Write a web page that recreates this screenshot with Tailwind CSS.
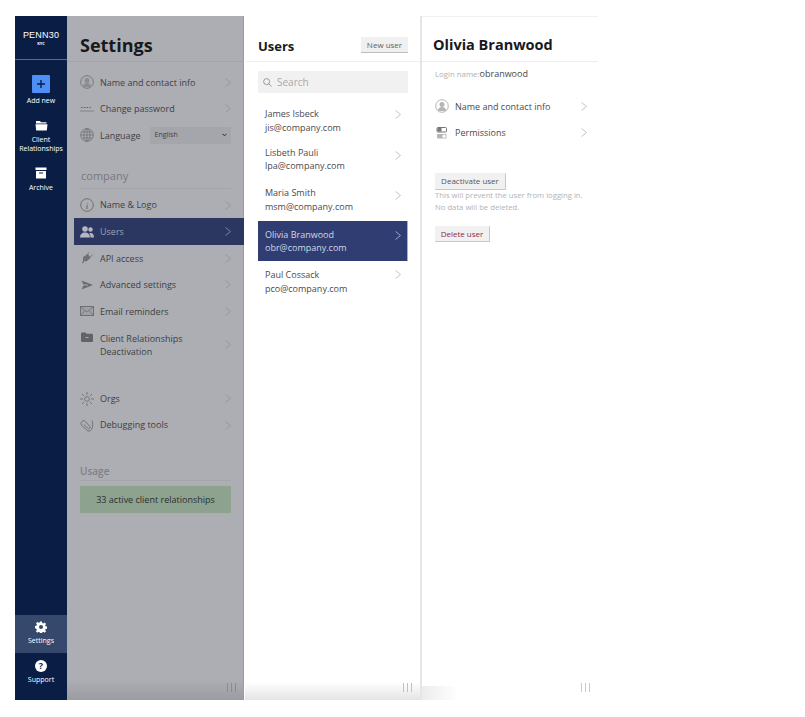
<!doctype html>
<html><head><meta charset="utf-8">
<script src="https://cdn.jsdelivr.net/npm/@tailwindcss/browser@4"></script>
</head>
<body class="bg-white font-['Open_Sans',sans-serif] overflow-hidden">
<div class="w-[805px] h-[717px] pt-[16px] pl-[15px]">
<div class="flex h-[684px] w-[583px]">

<!-- nav -->
<nav class="w-[52px] shrink-0 bg-[#0a1e45] flex flex-col text-white">
  <div class="h-[44px] border-b border-[#5c6b88] flex flex-col items-center pt-[13px]">
    <span class="text-[9px] leading-[12px] tracking-[0.2px] font-['Liberation_Sans',sans-serif]">PENN30</span>
    <span class="text-[4px] leading-[5px] font-bold">KYC</span>
  </div>
  <div class="flex flex-col items-center mt-[15px]">
    <span class="w-[18px] h-[18px] bg-[#4d8ff5] rounded-[1px] flex items-center justify-center">
      <svg width="8" height="8" viewBox="0 0 8 8"><path d="M4 0v8M0 4h8" stroke="#0a1e45" stroke-width="1.4"/></svg>
    </span>
    <span class="text-[7px] leading-[9px] mt-[3px]">Add new</span>
    <svg class="mt-[15px]" width="13" height="11" viewBox="0 0 13 11"><path d="M1 1h4l1 1.2h5.500v1.200H1zM0.5 4.200h12l-.7 6.300H1.200z" fill="#fff"/></svg>
    <span class="text-[7px] leading-[9px] mt-[4px] text-center whitespace-nowrap">Client<br>Relationships</span>
    <svg class="mt-[14px]" width="12" height="12" viewBox="0 0 12 12"><path d="M0.500 0.500h11v2.500h-11zM1 4h10v7.500H1z" fill="#fff"/><path d="M4 6h4" stroke="#0a1e45" stroke-width="1"/></svg>
    <span class="text-[7px] leading-[9px] mt-[4px]">Archive</span>
  </div>
  <div class="mt-auto flex flex-col">
    <div class="h-[38px] bg-[#36486b] flex flex-col items-center pt-[6px]">
      <svg width="12" height="12" viewBox="0 0 24 24"><path fill="#fff" fill-rule="evenodd" d="M10 1h4l.6 3.200 2 .8 2.700-1.800 2.800 2.800-1.800 2.700.8 2 3.200.6v4l-3.200.6-.8 2 1.800 2.700-2.800 2.800-2.700-1.800-2 .8-.6 3.200h-4l-.6-3.200-2-.8-2.700 1.800-2.800-2.800 1.800-2.700-.8-2L-.1 14v-4l3.200-.6.8-2L2.100 4.700l2.800-2.800 2.700 1.800 2-.8zM12 8a4 4 0 1 0 0 8 4 4 0 0 0 0-8z"/></svg>
      <span class="text-[7px] leading-[9px] mt-[3px]">Settings</span>
    </div>
    <div class="h-[46px] mt-[1px] flex flex-col items-center pt-[6px]">
      <span class="w-[12px] h-[12px] rounded-full bg-white text-[#0a1e45] text-[9px] leading-[12px] font-bold text-center">?</span>
      <span class="text-[7px] leading-[9px] mt-[3px]">Support</span>
    </div>
  </div>
</nav>

<!-- settings -->
<section class="relative w-[178px] shrink-0 bg-[#adaeb3] border-r border-white text-[#3d3e42] text-[9px] shadow-[inset_-1px_0_0_#9a9ba2]">
  <div class="h-[46px] border-b border-[#a3a4a9] flex items-center pl-[13px] pt-[13px]">
    <h1 class="text-[18px] leading-[24px] font-bold text-[#18191c]">Settings</h1>
  </div>
  <ul class="mt-[7px] pl-[13px] pr-[13px]">
    <li class="h-[26.6px] flex items-center">
      <svg class="w-[14px] shrink-0" width="14" height="14" viewBox="0 0 14 14"><circle cx="7" cy="7" r="6.300" fill="none" stroke="#77787d"/><circle cx="7" cy="5.500" r="2.500" fill="#8b8c91"/><path d="M3 12c0-3 1.500-4 4-4s4 1 4 4z" fill="#8b8c91"/></svg>
      <span class="ml-[6px] flex-1">Name and contact info</span>
      <svg width="6" height="9" viewBox="0 0 6 9"><path d="M.5.500l5 4-5 4" fill="none" stroke="#96979c"/></svg>
    </li>
    <li class="h-[26.6px] flex items-center">
      <svg class="w-[14px] shrink-0" width="14" height="6" viewBox="0 0 14 6"><path d="M1 1.500h1.500M3.800 1.500h1.500M6.600 1.500h1.500M9.400 1.500h1.500" stroke="#5f6065"/><path d="M0 5h14" stroke="#77787d" stroke-width=".8"/></svg>
      <span class="ml-[6px] flex-1">Change password</span>
      <svg width="6" height="9" viewBox="0 0 6 9"><path d="M.5.500l5 4-5 4" fill="none" stroke="#96979c"/></svg>
    </li>
    <li class="h-[26.6px] flex items-center">
      <svg class="w-[14px] shrink-0" width="14" height="14" viewBox="0 0 14 14" fill="none" stroke="#6f7075" stroke-width=".8"><circle cx="7" cy="7" r="6.300"/><ellipse cx="7" cy="7" rx="3" ry="6.300"/><path d="M7 .7v12.600M.7 7h12.600M1.500 4h11M1.500 10h11"/></svg>
      <span class="ml-[6px]">Language</span>
      <span class="ml-[9px] flex-1 h-[17px] bg-[#a5a6ab] flex items-center justify-between pl-[5px] pr-[4px] text-[7px]">English
        <svg width="5" height="4" viewBox="0 0 5 4"><path d="M.5.800l2 2 2-2" fill="none" stroke="#25262a" stroke-width="1"/></svg>
      </span>
    </li>
  </ul>
  <div class="mt-[19px] mx-[13px] h-[21px] text-[11px] leading-[16px] text-[#77787e] border-b border-[#a5a6ab] pl-px">company</div>
  <ul class="mt-[3px] pl-[7px]">
    <li class="h-[26.6px] flex items-center pl-[6px] pr-[13px]">
      <svg class="w-[14px] shrink-0" width="14" height="14" viewBox="0 0 14 14"><circle cx="7" cy="7" r="6.300" fill="none" stroke="#6f7075"/><text x="7" y="10.500" text-anchor="middle" font-size="9" font-style="italic" font-family="Liberation Serif" fill="#55565b">i</text></svg>
      <span class="ml-[6px] flex-1">Name &amp; Logo</span>
      <svg width="6" height="9" viewBox="0 0 6 9"><path d="M.5.500l5 4-5 4" fill="none" stroke="#96979c"/></svg>
    </li>
    <li class="h-[26.6px] flex items-center pl-[6px] pr-[13px] bg-[#2b3760] text-[#9da3b8]">
      <svg class="w-[14px] shrink-0" width="14" height="12" viewBox="0 0 14 12" fill="#b5b7c2"><circle cx="5" cy="3" r="2.800"/><path d="M0 11.500c0-3 2-5 5-5s5 2 5 5z"/><circle cx="10.500" cy="3.500" r="2.200"/><path d="M10.500 11.500h3.500c0-2.500-1-4.500-3.500-4.500-.7 0-1 .2-1.300.4 1 1 1.300 2.500 1.300 4.100z"/></svg>
      <span class="ml-[6px] flex-1">Users</span>
      <svg width="6" height="9" viewBox="0 0 6 9"><path d="M.5.500l5 4-5 4" fill="none" stroke="#7d8298"/></svg>
    </li>
    <li class="h-[26.6px] flex items-center pl-[6px] pr-[13px]">
      <svg class="w-[14px] shrink-0" width="14" height="12" viewBox="0 0 14 12" fill="#6f7075"><path d="M3 5l5-3 2.500 4-4 3.500-2-.5-1.500 2.500-1-.5L3 8.500z"/><path d="M7 3l2-2.500M10 5l2.500-2" stroke="#6f7075"/></svg>
      <span class="ml-[6px] flex-1">API access</span>
      <svg width="6" height="9" viewBox="0 0 6 9"><path d="M.5.500l5 4-5 4" fill="none" stroke="#96979c"/></svg>
    </li>
    <li class="h-[26.6px] flex items-center pl-[6px] pr-[13px]">
      <svg class="w-[14px] shrink-0" width="14" height="10" viewBox="0 0 14 10"><path d="M1.500.500L13 5 1.500 9.500 3.500 5.500H8V4.500H3.500z" fill="#6a6b70"/></svg>
      <span class="ml-[6px] flex-1">Advanced settings</span>
      <svg width="6" height="9" viewBox="0 0 6 9"><path d="M.5.500l5 4-5 4" fill="none" stroke="#96979c"/></svg>
    </li>
    <li class="h-[26.6px] flex items-center pl-[6px] pr-[13px]">
      <svg class="w-[14px] shrink-0" width="14" height="10" viewBox="0 0 14 10" fill="none" stroke="#6f7075"><rect x=".5" y=".5" width="13" height="9" fill="#a0a1a6"/><path d="M.5.500L7 6l6.500-5.500M.5 9.500L5 4.500M13.500 9.500L9 4.500" stroke-width=".8"/></svg>
      <span class="ml-[6px] flex-1">Email reminders</span>
      <svg width="6" height="9" viewBox="0 0 6 9"><path d="M.5.500l5 4-5 4" fill="none" stroke="#96979c"/></svg>
    </li>
    <li class="h-[40px] flex items-center pl-[6px] pr-[13px]">
      <svg class="w-[14px] shrink-0 self-start mt-[7px]" width="12" height="10" viewBox="0 0 12 10"><path d="M0 1.500A1 1 0 0 1 1 .5h3.500l1 1.200H11a1 1 0 0 1 1 1V9a1 1 0 0 1-1 1H1a1 1 0 0 1-1-1z" fill="#626368"/><path d="M4.500 5.500h3" stroke="#adaeb3"/></svg>
      <span class="ml-[6px] flex-1 leading-[13px]">Client Relationships<br>Deactivation</span>
      <svg width="6" height="9" viewBox="0 0 6 9"><path d="M.5.500l5 4-5 4" fill="none" stroke="#96979c"/></svg>
    </li>
  </ul>
  <ul class="mt-[20.5px] pl-[13px] pr-[13px]">
    <li class="h-[26.6px] flex items-center">
      <svg class="w-[14px] shrink-0" width="14" height="14" viewBox="0 0 14 14" fill="none" stroke="#6f7075" stroke-width=".9"><circle cx="7" cy="7" r="2.300"/><path d="M7 0v3M7 11v3M0 7h3M11 7h3M2 2l2.200 2.200M9.800 9.800L12 12M12 2L9.800 4.200M4.200 9.800L2 12"/></svg>
      <span class="ml-[6px] flex-1">Orgs</span>
      <svg width="6" height="9" viewBox="0 0 6 9"><path d="M.5.500l5 4-5 4" fill="none" stroke="#96979c"/></svg>
    </li>
    <li class="h-[26.6px] flex items-center">
      <svg class="w-[14px] shrink-0" width="13" height="13" viewBox="0 0 13 13" fill="none" stroke="#6f7075" stroke-width="1"><path d="M11 10.500C9.500 12.500 7.500 12.500 6 11L1.500 6.500C0 5 .5 3.500 1.500 2.500s2.300-1 3.300 0L9 7c1 1 .6 2-.2 2.500-.7.400-1.300.2-2-.5L3.500 5.500"/><path d="M11.500 1.500c1.200 2 1 6-.5 9"/></svg>
      <span class="ml-[6px] flex-1">Debugging tools</span>
      <svg width="6" height="9" viewBox="0 0 6 9"><path d="M.5.500l5 4-5 4" fill="none" stroke="#96979c"/></svg>
    </li>
  </ul>
  <div class="mt-[25.5px] mx-[13px] h-[17px] text-[10px] leading-[14px] font-semibold text-[#7f8086] border-b border-[#a5a6ab]">Usage</div>
  <div class="mt-[5px] mx-[13px] h-[27px] bg-[#8ea290] flex items-center justify-center text-[#2b302c]">33 active client relationships</div>
  <div class="absolute left-0 right-0 bottom-0 h-[20px] bg-gradient-to-b from-transparent to-[#9b9ca1]"></div>
  <span class="absolute right-[8px] bottom-[8px] w-[9px] h-[9px] border-x border-[#8a8b90] flex justify-center"><i class="block w-px h-full bg-[#8a8b90]"></i></span>
</section>

<!-- users -->
<section class="relative w-[177px] shrink-0 bg-white border-r-2 border-[#e6e6e8] text-[9px] text-[#4a4a4e]">
  <div class="h-[46px] border-b border-[#efeff0] flex items-end justify-between pl-[13px] pr-[12px] pb-[7px]">
    <h2 class="text-[13px] leading-[16px] font-bold text-[#18191c]">Users</h2>
    <span class="w-[47px] h-[16px] bg-[#f0f0f0] border-b border-[#bdbdbd] text-center text-[8px] leading-[15px] text-[#5e5e62] mb-[1px]">New user</span>
  </div>
  <div class="ml-[13px] mr-[12px] mt-[9px] h-[22px] bg-[#f1f1f2] flex items-center pl-[5px] text-[10px] text-[#a9a9ad]">
    <svg width="9" height="9" viewBox="0 0 9 9" fill="none" stroke="#9a9a9e"><circle cx="3.600" cy="3.600" r="3"/><path d="M5.800 5.800L8.500 8.500"/></svg>
    <span class="ml-[5px]">Search</span>
  </div>
  <ul class="mt-[12px] ml-[13px] mr-[12px] leading-[13.5px]">
    <li class="h-[38.5px] flex items-start justify-between pl-[7px] pr-[7px] pt-[2.25px]"><span>James Isbeck<br>jis@company.com</span><svg class="mt-[3px]" width="6" height="9" viewBox="0 0 6 9"><path d="M.5.500l5 4-5 4" fill="none" stroke="#c4c4c6"/></svg></li>
    <li class="h-[40px] flex items-start justify-between pl-[7px] pr-[7px] pt-[2.25px]"><span>Lisbeth Pauli<br>lpa@company.com</span><svg class="mt-[5px]" width="6" height="9" viewBox="0 0 6 9"><path d="M.5.500l5 4-5 4" fill="none" stroke="#c4c4c6"/></svg></li>
    <li class="h-[37.5px] flex items-start justify-between pl-[7px] pr-[7px] pt-[2.75px]"><span>Maria Smith<br>msm@company.com</span><svg class="mt-[5px]" width="6" height="9" viewBox="0 0 6 9"><path d="M.5.500l5 4-5 4" fill="none" stroke="#c4c4c6"/></svg></li>
    <li class="h-[40px] bg-[#2f3d72] text-[#d4d7e4] flex items-center justify-between pl-[7px] pr-[6px] border-r border-[#a9add0]"><span>Olivia Branwood<br>obr@company.com</span><svg class="mb-[11px]" width="6" height="9" viewBox="0 0 6 9"><path d="M.5.500l5 4-5 4" fill="none" stroke="#9fa5c2"/></svg></li>
    <li class="h-[40px] flex items-start justify-between pl-[7px] pr-[7px] pt-[7.25px]"><span>Paul Cossack<br>pco@company.com</span><svg class="mt-[2px]" width="6" height="9" viewBox="0 0 6 9"><path d="M.5.500l5 4-5 4" fill="none" stroke="#c4c4c6"/></svg></li>
  </ul>
  <div class="absolute left-0 right-0 bottom-0 h-[18px] bg-gradient-to-b from-transparent to-[#e4e4e5]"></div>
  <span class="absolute right-[8px] bottom-[8px] w-[9px] h-[9px] border-x border-[#c0c0c2] flex justify-center"><i class="block w-px h-full bg-[#c0c0c2]"></i></span>
</section>

<!-- detail -->
<section class="relative w-[176px] shrink-0 bg-white border-t border-[#f0f0f0] text-[9px] text-[#4a4a4e]">
  <div class="h-[45px] border-b border-[#efeff0] flex items-end pl-[11px] pb-[7px]">
    <h2 class="text-[14.5px] leading-[19px] font-bold text-[#18191c]">Olivia Branwood</h2>
  </div>
  <p class="pl-[13px] mt-[6px] leading-[12px] text-[#b0b0b3] text-[7.8px]">Login name:<span class="text-[9px] text-[#48484c]">obranwood</span></p>
  <ul class="mt-[13px] pl-[13px] pr-[11px]">
    <li class="h-[26.6px] flex items-center">
      <svg class="w-[14px] shrink-0" width="14" height="14" viewBox="0 0 14 14"><circle cx="7" cy="7" r="6.300" fill="none" stroke="#b5b5b8"/><circle cx="7" cy="5.500" r="2.500" fill="#b5b5b8"/><path d="M3 12c0-3 1.500-4 4-4s4 1 4 4z" fill="#b5b5b8"/></svg>
      <span class="ml-[6px] flex-1">Name and contact info</span>
      <svg width="6" height="9" viewBox="0 0 6 9"><path d="M.5.500l5 4-5 4" fill="none" stroke="#c4c4c6"/></svg>
    </li>
    <li class="h-[26.6px] flex items-center">
      <svg class="w-[14px] shrink-0" width="11" height="12" viewBox="0 0 11 12"><rect x=".5" y=".5" width="9.500" height="4.500" rx="1" fill="none" stroke="#77777b"/><rect x="1" y="1" width="4" height="3.500" fill="#77777b"/><rect x=".5" y="7" width="9.500" height="4.500" rx="1" fill="#b5b5b8"/><circle cx="7.500" cy="9.200" r="1.700" fill="#fff"/></svg>
      <span class="ml-[6px] flex-1">Permissions</span>
      <svg width="6" height="9" viewBox="0 0 6 9"><path d="M.5.500l5 4-5 4" fill="none" stroke="#c4c4c6"/></svg>
    </li>
  </ul>
  <button class="block ml-[13px] mt-[27px] w-[71px] h-[17px] bg-[#f1f1f1] border-b border-r border-[#c9c9c9] rounded-[1px] text-[8px] font-medium text-[#55555a] text-center">Deactivate user</button>
  <p class="pl-[13px] mt-0 text-[7.7px] leading-[11.5px] text-[#b3b3b6]">This will prevent the user from logging in.<br>No data will be deleted.</p>
  <button class="block ml-[13px] mt-[13px] w-[55px] h-[16px] bg-[#f1f1f1] border-b border-r border-[#c9c9c9] rounded-[1px] text-[8px] font-medium text-[#8a2b4a] text-center">Delete user</button>
  <div class="absolute left-0 bottom-0 w-[36px] h-[14px] bg-gradient-to-r from-[#ececec] to-transparent"></div>
  <span class="absolute right-[8px] bottom-[8px] w-[9px] h-[9px] border-x border-[#c9c9cb] flex justify-center"><i class="block w-px h-full bg-[#c9c9cb]"></i></span>
</section>

</div></div>
</body></html>
